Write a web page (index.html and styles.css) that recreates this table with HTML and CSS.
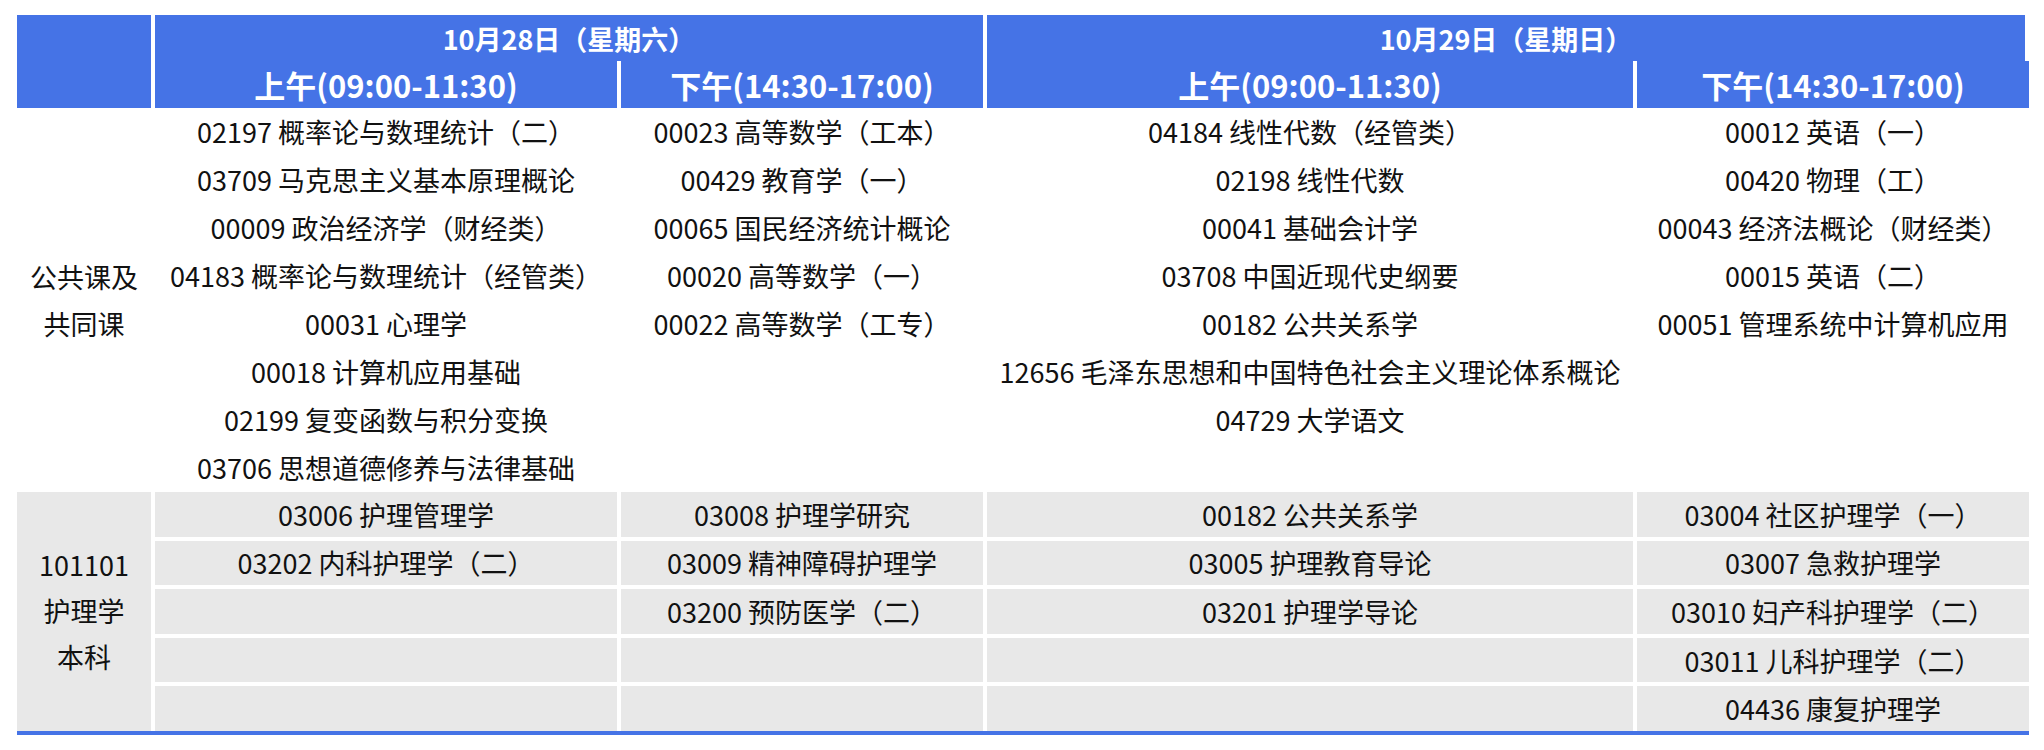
FILE: index.html
```html
<!DOCTYPE html>
<html lang="zh-CN">
<head>
<meta charset="utf-8">
<title>考试安排</title>
<link rel="stylesheet" href="styles.css">
</head>
<body>
<div class="sheet">
  <div class="grid head">
    <div class="hcell corner"></div>
    <div class="hcell day d1">10月28日（星期六）</div>
    <div class="hcell day d2">10月29日（星期日）</div>
    <div class="hcell slot">上午(09:00-11:30)</div>
    <div class="hcell slot">下午(14:30-17:00)</div>
    <div class="hcell slot">上午(09:00-11:30)</div>
    <div class="hcell slot">下午(14:30-17:00)</div>
  </div>

  <div class="grid pub">
    <div class="cell label">
      <span>公共课及</span>
      <span>共同课</span>
    </div>
    <div class="cell list">
      <span>02197 概率论与数理统计（二）</span>
      <span>03709 马克思主义基本原理概论</span>
      <span>00009 政治经济学（财经类）</span>
      <span>04183 概率论与数理统计（经管类）</span>
      <span>00031 心理学</span>
      <span>00018 计算机应用基础</span>
      <span>02199 复变函数与积分变换</span>
      <span>03706 思想道德修养与法律基础</span>
    </div>
    <div class="cell list">
      <span>00023 高等数学（工本）</span>
      <span>00429 教育学（一）</span>
      <span>00065 国民经济统计概论</span>
      <span>00020 高等数学（一）</span>
      <span>00022 高等数学（工专）</span>
    </div>
    <div class="cell list">
      <span>04184 线性代数（经管类）</span>
      <span>02198 线性代数</span>
      <span>00041 基础会计学</span>
      <span>03708 中国近现代史纲要</span>
      <span>00182 公共关系学</span>
      <span>12656 毛泽东思想和中国特色社会主义理论体系概论</span>
      <span>04729 大学语文</span>
    </div>
    <div class="cell list">
      <span>00012 英语（一）</span>
      <span>00420 物理（工）</span>
      <span>00043 经济法概论（财经类）</span>
      <span>00015 英语（二）</span>
      <span>00051 管理系统中计算机应用</span>
    </div>
  </div>

  <div class="grid nurse">
    <div class="cell gray label tall">
      <span>101101</span>
      <span>护理学</span>
      <span>本科</span>
    </div>
    <div class="cell gray">03006 护理管理学</div>
    <div class="cell gray">03008 护理学研究</div>
    <div class="cell gray">00182 公共关系学</div>
    <div class="cell gray">03004 社区护理学（一）</div>

    <div class="cell gray">03202 内科护理学（二）</div>
    <div class="cell gray">03009 精神障碍护理学</div>
    <div class="cell gray">03005 护理教育导论</div>
    <div class="cell gray">03007 急救护理学</div>

    <div class="cell gray"></div>
    <div class="cell gray">03200 预防医学（二）</div>
    <div class="cell gray">03201 护理学导论</div>
    <div class="cell gray">03010 妇产科护理学（二）</div>

    <div class="cell gray"></div>
    <div class="cell gray"></div>
    <div class="cell gray"></div>
    <div class="cell gray">03011 儿科护理学（二）</div>

    <div class="cell gray"></div>
    <div class="cell gray"></div>
    <div class="cell gray"></div>
    <div class="cell gray">04436 康复护理学</div>
  </div>
</div>
</body>
</html>
```

FILE: styles.css
```css
html, body {
  margin: 0;
  padding: 0;
  background: #ffffff;
}

body {
  font-family: "Noto Sans CJK SC", "Microsoft YaHei", sans-serif;
  color: #111111;
}

.sheet {
  padding: 15px 0 0 17px;
  width: 2012px;
}

.grid {
  display: grid;
  grid-template-columns: 134px 462px 362px 646px 392px;
  column-gap: 4px;
}

/* header */
.head {
  grid-template-rows: 46px 47px;
}

.hcell {
  background: #4573e6;
  color: #ffffff;
  font-weight: 700;
  display: flex;
  align-items: center;
  justify-content: center;
  white-space: nowrap;
}

.corner {
  grid-row: 1 / 3;
}

.day {
  font-size: 27px;
}

.d1 {
  grid-column: 2 / 4;
}

.d2 {
  grid-column: 4 / 6;
  margin-right: 4px;
}

.slot {
  font-size: 31px;
}

/* public courses */
.pub {
  height: 384px;
}

.cell {
  font-size: 27px;
  display: flex;
  align-items: center;
  justify-content: center;
  white-space: nowrap;
}

.list {
  flex-direction: column;
  justify-content: flex-start;
}

.list span {
  line-height: 48px;
}

.label {
  flex-direction: column;
}

.label span {
  line-height: 47px;
}

/* nursing */
.nurse {
  grid-template-rows: repeat(5, 1fr);
  row-gap: 4px;
  height: 239px;
  border-bottom: 4px solid #4573e6;
}

.gray {
  background: #e8e8e8;
}

.tall {
  grid-row: 1 / 6;
}

.tall span {
  line-height: 46px;
}
```
